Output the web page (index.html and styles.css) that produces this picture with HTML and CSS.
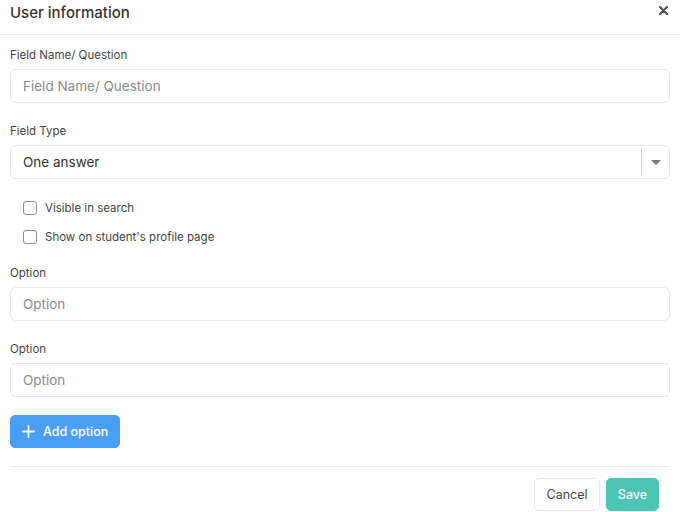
FILE: index.html
```html
<!DOCTYPE html>
<html>
<head>
<meta charset="utf-8">
<link rel="stylesheet" href="styles.css">
</head>
<body>
<div class="modal">
  <div class="modal-header">
    <h1 class="modal-title">User information</h1>
    <button class="close" aria-label="Close">
      <svg width="9" height="9" viewBox="0 0 9 9"><path d="M1 1L8 8M8 1L1 8" stroke="#555" stroke-width="2.2" stroke-linecap="round"/></svg>
    </button>
  </div>
  <div class="modal-body">
    <div class="field">
      <label class="label">Field Name/ Question</label>
      <input class="input" type="text" placeholder="Field Name/ Question">
    </div>
    <div class="field">
      <label class="label">Field Type</label>
      <div class="select">
        <span class="select-value">One answer</span>
        <span class="select-sep"></span>
        <span class="select-caret"></span>
      </div>
    </div>
    <div class="checks">
      <label class="check"><span class="box"></span>Visible in search</label>
      <label class="check"><span class="box"></span>Show on student's profile page</label>
    </div>
    <div class="field">
      <label class="label">Option</label>
      <input class="input" type="text" placeholder="Option">
    </div>
    <div class="field field-tight">
      <label class="label">Option</label>
      <input class="input" type="text" placeholder="Option">
    </div>
    <button class="btn btn-add">
      <svg width="13" height="13" viewBox="0 0 13 13"><path d="M6.5 1V12M1 6.5H12" stroke="#fff" stroke-width="1.8" stroke-linecap="round"/></svg>
      Add option
    </button>
    <div class="modal-footer">
      <button class="btn btn-cancel">Cancel</button>
      <button class="btn btn-save">Save</button>
    </div>
  </div>
</div>
</body>
</html>
```

FILE: styles.css
```css
* { box-sizing: border-box; }
body {
  margin: 0;
  background: #fff;
  font-family: "Inter", "Open Sans", sans-serif;
  color: #333;
}
.modal { width: 680px; }
.modal-header {
  height: 35px;
  border-bottom: 1px solid #e3e6ec;
  display: flex;
  align-items: center;
  justify-content: space-between;
  padding: 0 12px 10px 10px;
}
.modal-title {
  margin: 0;
  font-size: 15px;
  font-weight: 500;
  color: #333;
}
.close {
  border: 0;
  background: none;
  padding: 0;
  margin-top: -4px;
  display: flex;
}
.modal-body { padding: 12px 10px 0 10px; }
.field { margin-bottom: 20px; }
.label {
  display: block;
  font-size: 11.5px;
  line-height: 16px;
  color: #444;
  margin-bottom: 6px;
}
.input, .select {
  display: flex;
  align-items: center;
  width: 100%;
  height: 34px;
  border: 1px solid #e3e6ec;
  border-radius: 6px;
  padding: 0 12px;
  font-family: inherit;
  font-size: 13.5px;
  color: #333;
  background: #fff;
  outline: none;
}
.input::placeholder { color: #8a8a8a; }
.select { padding-right: 8px; }
.select-value { flex: 1; }
.select-sep {
  width: 1px;
  height: 26px;
  background: #d0d0d0;
  margin-right: 9px;
}
.select-caret {
  width: 0; height: 0;
  border-left: 5px solid transparent;
  border-right: 5px solid transparent;
  border-top: 5px solid #777;
}
.checks {
  margin-top: -1px;
  padding-left: 13px;
  display: flex;
  flex-direction: column;
  gap: 9px;
  margin-bottom: 18px;
}
.check {
  display: flex;
  align-items: center;
  height: 20px;
  font-size: 11.5px;
  color: #444;
}
.box {
  width: 14px;
  height: 14px;
  border: 1px solid #8c8c8c;
  border-radius: 3px;
  margin-right: 8px;
}
.field-tight { margin-bottom: 20px; }
.btn {
  font-family: inherit;
  font-size: 12.5px;
  font-weight: 500;
  border-radius: 5px;
  cursor: pointer;
}
.btn-add {
  display: flex;
  align-items: center;
  gap: 8px;
  height: 33px;
  padding: 0 11px 0 11px;
  border: 1px solid #4a9ef5;
  background: #4a9ef5;
  color: #fff;
  margin-top: -2px;
}
.modal-footer {
  margin-top: 18px;
  border-top: 1px solid #e3e6ec;
  padding: 11px 11px 0 0;
  display: flex;
  justify-content: flex-end;
  gap: 6px;
}
.btn-cancel {
  height: 33px;
  width: 66px;
  background: #fff;
  border: 1px solid #e3e6ec;
  color: #444;
  font-weight: 400;
}
.btn-save {
  height: 33px;
  width: 53px;
  background: #4cc4b6;
  border: 1px solid #4cc4b6;
  color: #fff;
}
```
